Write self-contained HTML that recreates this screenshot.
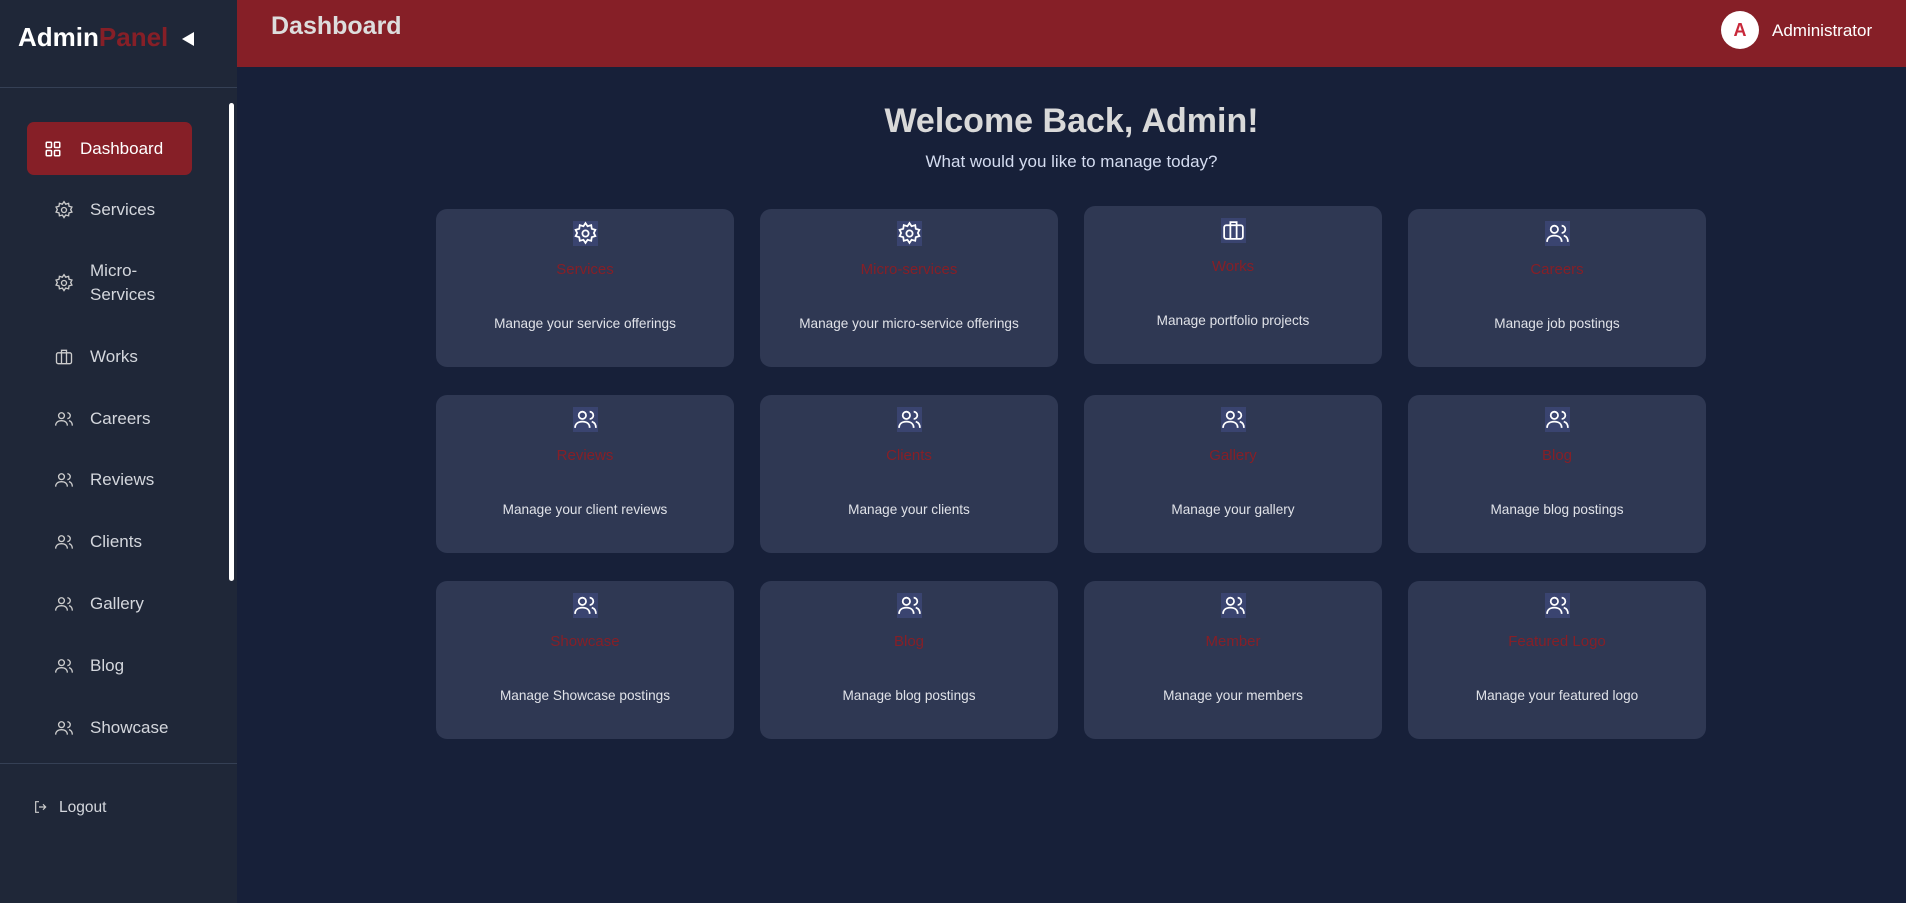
<!DOCTYPE html>
<html><head><meta charset="utf-8"><style>
*{box-sizing:border-box;margin:0;padding:0}
body{width:1906px;height:903px;overflow:hidden;background:#172039;font-family:"Liberation Sans",sans-serif;position:relative}
.side{position:absolute;left:0;top:0;width:237px;height:903px;background:#1f2738}
.logo{position:absolute;left:18px;top:22px;font-size:26px;font-weight:bold;color:#fff}
.logo span{color:#861f27}
.tri{position:absolute;left:182px;top:32px;width:0;height:0;border-top:7px solid transparent;border-bottom:7px solid transparent;border-right:12px solid #fff}
.hr{position:absolute;left:0;width:237px;height:1px;background:#354055}
.item{position:absolute;left:27px;width:165px;display:flex;align-items:center;color:#d4d7dd;font-size:17px}
.item svg{position:absolute;left:27px}
.item .t{position:absolute;left:63px;line-height:24px}
.active{background:#861f27;border-radius:7px;height:53px;color:#fff}
.active svg{left:17px}.active .t{left:53px}
.sb{position:absolute;left:229px;top:103px;width:5px;height:478px;background:#fff;border-radius:3px}
.hdr{position:absolute;left:237px;top:0;width:1669px;height:67px;background:#861f27}
.hdr h1{position:absolute;left:34px;top:12px;font-size:25px;color:#ddd;font-weight:bold}
.av{position:absolute;left:1484px;top:11px;width:38px;height:38px;border-radius:50%;background:#fff;color:#c8283a;font-weight:bold;font-size:18px;text-align:center;line-height:38px}
.adm{position:absolute;left:1535px;top:21px;color:#fff;font-size:17px}
.wt{position:absolute;left:237px;width:1669px;text-align:center;color:#d9d9d9}
.card{position:absolute;width:298px;height:158px;background:#2f3853;border-radius:11px;text-align:center}
.card .ic{position:absolute;left:137px;top:12px;width:25px;height:25px;background:#3a4470}
.card .ti{position:absolute;left:0;width:100%;top:52px;font-size:15px;color:#861f27}
.card .de{position:absolute;left:0;width:100%;top:107px;font-size:13.6px;color:#e0e2e8}
.lo{position:absolute;left:33px;top:799px;color:#d4d7dd;font-size:15.5px}
</style></head><body>
<div class="side">
<div class="logo">Admin<span>Panel</span></div><div class="tri"></div>
<div class="hr" style="top:87px"></div>
<div class="hr" style="top:763px"></div>
<div class="sb"></div>
<div class="item active" style="top:122px"><svg width="18" height="18" viewBox="0 0 24 24" fill="none" stroke="#fff" stroke-width="2"><rect x="3" y="3" width="7" height="7" rx="1"/><rect x="14" y="3" width="7" height="7" rx="1"/><rect x="3" y="14" width="7" height="7" rx="1"/><rect x="14" y="14" width="7" height="7" rx="1"/></svg><span class="t">Dashboard</span></div>
<div class="item" style="top:198px;height:24px"><svg width="20" height="20" viewBox="0 0 24 24" fill="none" stroke="#ccc" stroke-width="1.6"><circle cx="12" cy="12" r="3"/><path d="M12 2l2 3 3.5-1 .5 3.5 3.5 1-1.5 3 1.5 3-3.5 1-.5 3.5-3.5-1-2 3-2-3-3.5 1-.5-3.5-3.5-1 1.5-3-1.5-3 3.5-1 .5-3.5 3.5 1z"/></svg><span class="t">Services</span></div>
<div class="item" style="top:259px;height:48px"><svg width="20" height="20" viewBox="0 0 24 24" fill="none" stroke="#ccc" stroke-width="1.6"><circle cx="12" cy="12" r="3"/><path d="M12 2l2 3 3.5-1 .5 3.5 3.5 1-1.5 3 1.5 3-3.5 1-.5 3.5-3.5-1-2 3-2-3-3.5 1-.5-3.5-3.5-1 1.5-3-1.5-3 3.5-1 .5-3.5 3.5 1z"/></svg><span class="t">Micro-<br>Services</span></div>
<div class="item" style="top:345px;height:24px"><svg width="20" height="20" viewBox="0 0 24 24" fill="none" stroke="#ccc" stroke-width="1.6"><rect x="3" y="7" width="18" height="13" rx="2"/><path d="M9 7V4h6v3M9 7v13M15 7v13"/></svg><span class="t">Works</span></div>
<div class="item" style="top:407px;height:24px"><svg width="20" height="20" viewBox="0 0 24 24" fill="none" stroke="#ccc" stroke-width="1.6"><circle cx="9" cy="8" r="3.5"/><path d="M2 20c0-4 3-6 7-6s7 2 7 6M16 4.5a3.5 3.5 0 010 7M18 14c2.5.8 4 2.8 4 6"/></svg><span class="t">Careers</span></div>
<div class="item" style="top:468px;height:24px"><svg width="20" height="20" viewBox="0 0 24 24" fill="none" stroke="#ccc" stroke-width="1.6"><circle cx="9" cy="8" r="3.5"/><path d="M2 20c0-4 3-6 7-6s7 2 7 6M16 4.5a3.5 3.5 0 010 7M18 14c2.5.8 4 2.8 4 6"/></svg><span class="t">Reviews</span></div>
<div class="item" style="top:530px;height:24px"><svg width="20" height="20" viewBox="0 0 24 24" fill="none" stroke="#ccc" stroke-width="1.6"><circle cx="9" cy="8" r="3.5"/><path d="M2 20c0-4 3-6 7-6s7 2 7 6M16 4.5a3.5 3.5 0 010 7M18 14c2.5.8 4 2.8 4 6"/></svg><span class="t">Clients</span></div>
<div class="item" style="top:592px;height:24px"><svg width="20" height="20" viewBox="0 0 24 24" fill="none" stroke="#ccc" stroke-width="1.6"><circle cx="9" cy="8" r="3.5"/><path d="M2 20c0-4 3-6 7-6s7 2 7 6M16 4.5a3.5 3.5 0 010 7M18 14c2.5.8 4 2.8 4 6"/></svg><span class="t">Gallery</span></div>
<div class="item" style="top:654px;height:24px"><svg width="20" height="20" viewBox="0 0 24 24" fill="none" stroke="#ccc" stroke-width="1.6"><circle cx="9" cy="8" r="3.5"/><path d="M2 20c0-4 3-6 7-6s7 2 7 6M16 4.5a3.5 3.5 0 010 7M18 14c2.5.8 4 2.8 4 6"/></svg><span class="t">Blog</span></div>
<div class="item" style="top:716px;height:24px"><svg width="20" height="20" viewBox="0 0 24 24" fill="none" stroke="#ccc" stroke-width="1.6"><circle cx="9" cy="8" r="3.5"/><path d="M2 20c0-4 3-6 7-6s7 2 7 6M16 4.5a3.5 3.5 0 010 7M18 14c2.5.8 4 2.8 4 6"/></svg><span class="t">Showcase</span></div>
<div class="lo"><svg width="16" height="16" viewBox="0 0 24 24" fill="none" stroke="#ccc" stroke-width="1.8" style="vertical-align:-3px;margin-right:10px"><path d="M9 4H4v16h5M15 8l4 4-4 4M19 12H9"/></svg>Logout</div>
</div>
<div class="hdr"><h1>Dashboard</h1><div class="av">A</div><div class="adm">Administrator</div></div>
<div class="wt" style="top:102px;font-size:34px;font-weight:bold">Welcome Back, Admin!</div>
<div class="wt" style="top:152px;font-size:17px;color:#d4dcf0">What would you like to manage today?</div>
<div id="cards"></div>
<script>
const gear='<svg width="25" height="25" viewBox="0 0 24 24" fill="none" stroke="#fff" stroke-width="1.7"><circle cx="12" cy="12" r="3"/><path d="M12 2l2 3 3.5-1 .5 3.5 3.5 1-1.5 3 1.5 3-3.5 1-.5 3.5-3.5-1-2 3-2-3-3.5 1-.5-3.5-3.5-1 1.5-3-1.5-3 3.5-1 .5-3.5 3.5 1z"/></svg>';
const brief='<svg width="25" height="25" viewBox="0 0 24 24" fill="none" stroke="#fff" stroke-width="1.7"><rect x="3" y="7" width="18" height="13" rx="2"/><path d="M9 7V4h6v3M9 7v13M15 7v13"/></svg>';
const users='<svg width="25" height="25" viewBox="0 0 24 24" fill="none" stroke="#fff" stroke-width="1.7"><circle cx="9" cy="8" r="3.5"/><path d="M2 20c0-4 3-6 7-6s7 2 7 6M16 4.5a3.5 3.5 0 010 7M18 14c2.5.8 4 2.8 4 6"/></svg>';
const d=[[gear,'Services','Manage your service offerings'],[gear,'Micro-services','Manage your micro-service offerings'],[brief,'Works','Manage portfolio projects'],[users,'Careers','Manage job postings'],[users,'Reviews','Manage your client reviews'],[users,'Clients','Manage your clients'],[users,'Gallery','Manage your gallery'],[users,'Blog','Manage blog postings'],[users,'Showcase','Manage Showcase postings'],[users,'Blog','Manage blog postings'],[users,'Member','Manage your members'],[users,'Featured Logo','Manage your featured logo']];
let h='';d.forEach((c,i)=>{const x=436+(i%4)*324,y=209+Math.floor(i/4)*186-(i==2?3:0);h+=`<div class="card" style="left:${x}px;top:${y}px"><div class="ic">${c[0]}</div><div class="ti">${c[1]}</div><div class="de">${c[2]}</div></div>`});
document.getElementById('cards').innerHTML=h;
</script>
</body></html>
